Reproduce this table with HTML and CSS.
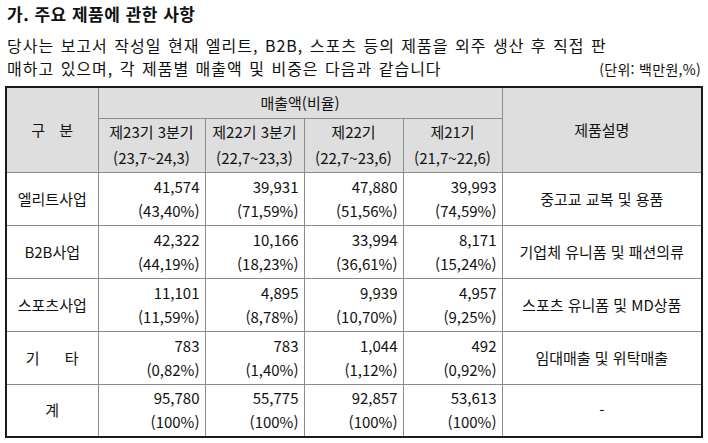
FILE: index.html
```html
<!DOCTYPE html>
<html lang="ko">
<head>
<meta charset="utf-8">
<link rel="stylesheet" href="styles.css">
</head>
<body>
<div class="page">
  <h1 class="title">가. 주요 제품에 관한 사항</h1>
  <p class="line">당사는 보고서 작성일 현재 엘리트, B2B, 스포츠 등의 제품을 외주 생산 후 직접 판</p>
  <div class="line line-split">
    <span>매하고 있으며, 각 제품별 매출액 및 비중은 다음과 같습니다</span>
    <span class="unit">(단위: 백만원,%)</span>
  </div>
  <table class="sales">
    <colgroup>
      <col class="c-name">
      <col class="c-first">
      <col class="c-num">
      <col class="c-num">
      <col class="c-num">
      <col class="c-desc">
    </colgroup>
    <thead>
      <tr class="h1">
        <th rowspan="2" class="spread">구 분</th>
        <th colspan="4">매출액(비율)</th>
        <th rowspan="2">제품설명</th>
      </tr>
      <tr class="h2">
        <th>제23기 3분기<br>(23,7~24,3)</th>
        <th>제22기 3분기<br>(22,7~23,3)</th>
        <th>제22기<br>(22,7~23,6)</th>
        <th>제21기<br>(21,7~22,6)</th>
      </tr>
    </thead>
    <tbody>
      <tr>
        <td class="name">엘리트사업</td>
        <td class="num">41,574<br>(43,40%)</td>
        <td class="num">39,931<br>(71,59%)</td>
        <td class="num">47,880<br>(51,56%)</td>
        <td class="num">39,993<br>(74,59%)</td>
        <td class="desc">중고교 교복 및 용품</td>
      </tr>
      <tr>
        <td class="name">B2B사업</td>
        <td class="num">42,322<br>(44,19%)</td>
        <td class="num">10,166<br>(18,23%)</td>
        <td class="num">33,994<br>(36,61%)</td>
        <td class="num">8,171<br>(15,24%)</td>
        <td class="desc">기업체 유니폼 및 패션의류</td>
      </tr>
      <tr>
        <td class="name">스포츠사업</td>
        <td class="num">11,101<br>(11,59%)</td>
        <td class="num">4,895<br>(8,78%)</td>
        <td class="num">9,939<br>(10,70%)</td>
        <td class="num">4,957<br>(9,25%)</td>
        <td class="desc">스포츠 유니폼 및 MD상품</td>
      </tr>
      <tr>
        <td class="name">기&nbsp;&nbsp;&nbsp;&nbsp;&nbsp;&nbsp;타</td>
        <td class="num">783<br>(0,82%)</td>
        <td class="num">783<br>(1,40%)</td>
        <td class="num">1,044<br>(1,12%)</td>
        <td class="num">492<br>(0,92%)</td>
        <td class="desc">임대매출 및 위탁매출</td>
      </tr>
      <tr>
        <td class="name">계</td>
        <td class="num">95,780<br>(100%)</td>
        <td class="num">55,775<br>(100%)</td>
        <td class="num">92,857<br>(100%)</td>
        <td class="num">53,613<br>(100%)</td>
        <td class="desc">-</td>
      </tr>
    </tbody>
  </table>
</div>
</body>
</html>
```

FILE: styles.css
```css
html, body {
  margin: 0;
  padding: 0;
  background: #ffffff;
}
body {
  font-family: "Noto Sans CJK KR", "Noto Sans", sans-serif;
  color: #111111;
}
.page {
  padding: 2px 5px 0 5px;
  width: 698px;
}
.title {
  margin: 0 0 0 2px;
  font-size: 17px;
  font-weight: bold;
  line-height: 24px;
  letter-spacing: 0.5px;
  color: #111111;
}
.line {
  margin: 0 0 0 2px;
  font-size: 16px;
  line-height: 23px;
  letter-spacing: 1px;
  word-spacing: 1px;
}
.title + .line {
  margin-top: 8px;
}
.line-split {
  display: flex;
  justify-content: space-between;
  align-items: baseline;
}
.unit {
  font-size: 14px;
  letter-spacing: 0.3px;
  word-spacing: 0;
  padding-right: 2px;
}
.sales {
  margin-top: 5px;
  border-collapse: collapse;
  table-layout: fixed;
  width: 698px;
  border: 2px solid #1a1a1a;
  font-size: 15px;
}
.c-name { width: 92px; }
.c-first { width: 107px; }
.c-num { width: 99px; }
.c-desc { width: 200px; }
.sales th,
.sales td {
  border: 1px solid #8c8c8c;
  padding: 0 5px;
  font-weight: normal;
  line-height: 24px;
}
.sales th {
  background: #dedede;
  text-align: center;
}
.sales tr.h1 { height: 31px; }
.sales tr.h2 { height: 54px; }
.sales tr.h2 th { line-height: 26px; }
.sales tbody tr { height: 53px; }
.spread { word-spacing: 10px; }
.name { text-align: center; }
.num { text-align: right; }
.desc { text-align: center; }
```
